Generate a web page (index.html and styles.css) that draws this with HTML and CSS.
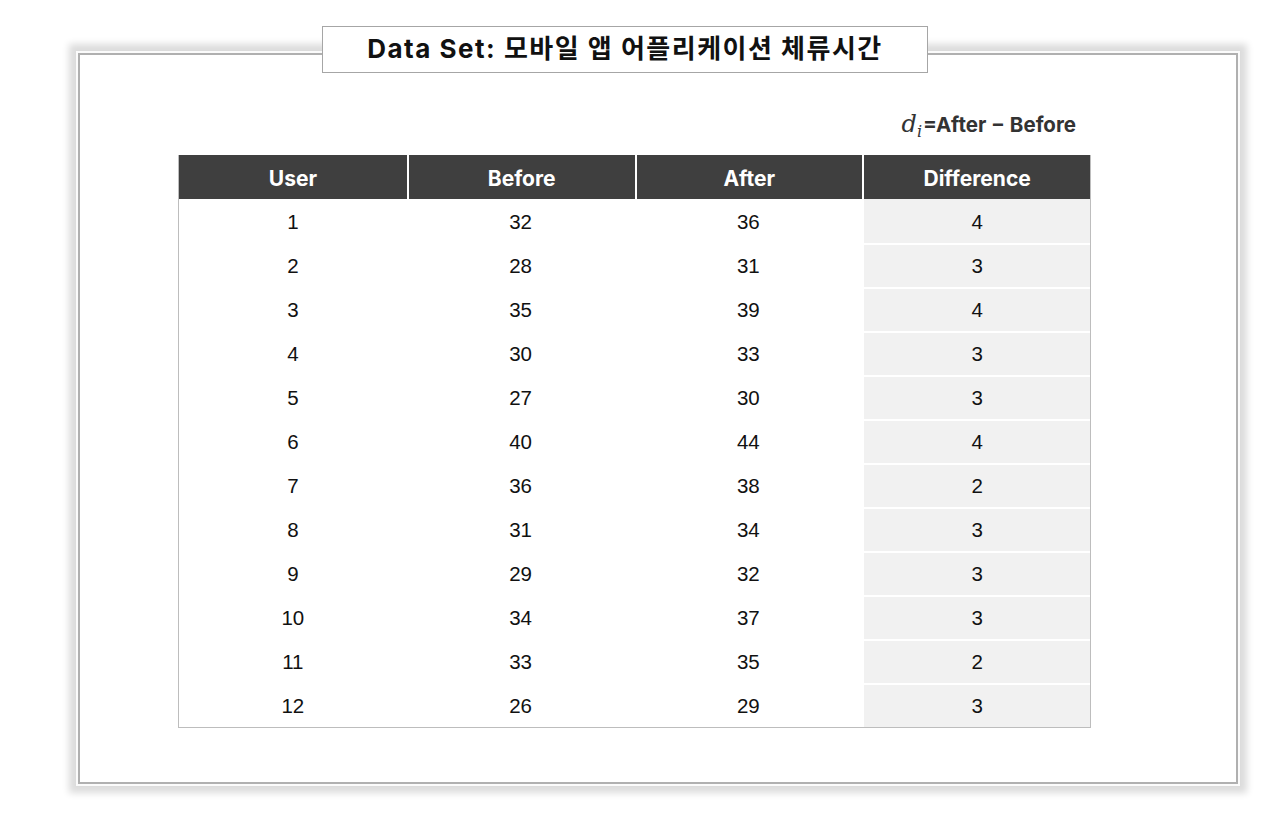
FILE: index.html
```html
<!DOCTYPE html>
<html lang="ko">
<head>
<meta charset="utf-8">
<title>Data Set</title>
<link rel="stylesheet" href="styles.css">
</head>
<body>
<div class="page">
  <section class="frame">
    <h1 class="title">Data Set: 모바일 앱 어플리케이션 체류시간</h1>
    <div class="content">
      <p class="formula"><span class="math">d<sub>i</sub></span>=After − Before</p>
      <table class="data">
        <thead>
          <tr><th>User</th><th>Before</th><th>After</th><th>Difference</th></tr>
        </thead>
        <tbody>
          <tr><td>1</td><td>32</td><td>36</td><td class="diff">4</td></tr>
          <tr><td>2</td><td>28</td><td>31</td><td class="diff">3</td></tr>
          <tr><td>3</td><td>35</td><td>39</td><td class="diff">4</td></tr>
          <tr><td>4</td><td>30</td><td>33</td><td class="diff">3</td></tr>
          <tr><td>5</td><td>27</td><td>30</td><td class="diff">3</td></tr>
          <tr><td>6</td><td>40</td><td>44</td><td class="diff">4</td></tr>
          <tr><td>7</td><td>36</td><td>38</td><td class="diff">2</td></tr>
          <tr><td>8</td><td>31</td><td>34</td><td class="diff">3</td></tr>
          <tr><td>9</td><td>29</td><td>32</td><td class="diff">3</td></tr>
          <tr><td>10</td><td>34</td><td>37</td><td class="diff">3</td></tr>
          <tr><td>11</td><td>33</td><td>35</td><td class="diff">2</td></tr>
          <tr><td>12</td><td>26</td><td>29</td><td class="diff">3</td></tr>
        </tbody>
      </table>
    </div>
  </section>
</div>
</body>
</html>
```

FILE: styles.css
```css
html, body {
  margin: 0;
  padding: 0;
  background: #ffffff;
}

body {
  font-family: "Liberation Sans", Arial, sans-serif;
  color: #111;
}

.page {
  padding: 53px 0 0 78px;
  height: 763px;
}

.frame {
  position: relative;
  box-sizing: border-box;
  width: 1160px;
  height: 731px;
  border: 2px solid #b0b0b0;
  background: #fff;
  box-shadow: 0 0 0 2px #fbfbfb, 0 0 7px 9px rgba(0, 0, 0, 0.14);
}

.title {
  position: absolute;
  left: 242px;
  top: -29px;
  box-sizing: border-box;
  width: 606px;
  height: 47px;
  margin: 0;
  padding-bottom: 6px;
  border: 1px solid #a6a6a6;
  background: #fff;
  display: flex;
  align-items: center;
  justify-content: center;
  font-family: Inter, "Noto Sans CJK KR", sans-serif;
  font-weight: 700;
  font-size: 26px;
  letter-spacing: 1.5px;
  color: #111;
}

.content {
  padding: 56px 0 0 98px;
  width: 913px;
}

.formula {
  margin: 0 0 18px 0;
  padding-right: 15px;
  height: 26px;
  line-height: 26px;
  text-align: right;
  font-family: Inter, "Liberation Sans", sans-serif;
  font-weight: 700;
  font-size: 20.5px;
  color: #333;
}

.math {
  font-family: "DejaVu Serif", "Liberation Serif", serif;
  font-style: italic;
  font-weight: 400;
  font-size: 24px;
  margin-right: 1px;
}

.math sub {
  font-size: 16px;
  vertical-align: -5px;
}

.data {
  border-collapse: separate;
  border-spacing: 0;
  table-layout: fixed;
  width: 913px;
  border-left: 1px solid #bdbdbd;
  border-right: 1px solid #bdbdbd;
  border-bottom: 1px solid #bdbdbd;
}

.data th {
  box-sizing: border-box;
  height: 44px;
  padding: 3px 0 0 0;
  background: #3f3f3f;
  color: #fff;
  font-family: Inter, "Liberation Sans", sans-serif;
  font-weight: 700;
  font-size: 21px;
  text-align: center;
}

.data th + th {
  border-left: 2px solid #fff;
}

.data td {
  box-sizing: border-box;
  height: 44px;
  padding: 1px 0 0 0;
  text-align: center;
  font-size: 20.5px;
  color: #111;
}

.data td.diff {
  background: #f1f1f1;
  border-left: 2px solid #fff;
}

.data tbody tr + tr td.diff {
  box-shadow: inset 0 2px 0 #fff;
}
```
